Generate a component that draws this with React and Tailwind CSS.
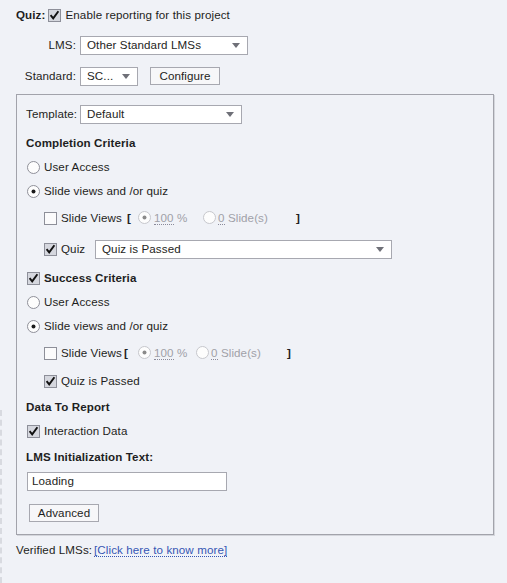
import React from 'react';

const Check = ({ checked }) => (
  <svg width="13" height="13" viewBox="0 0 13 13" className="shrink-0">
    <rect x="0.5" y="0.5" width="12" height="12" fill={checked ? '#d5d7de' : '#fbfbfc'} stroke="#8d8f99" />
    {checked && <path d="M2.6 6.2 L5.2 9.4 L10.4 2.2" stroke="#111" strokeWidth="1.9" fill="none" />}
  </svg>
);

const Radio = ({ checked, disabled }) => (
  <svg width="13" height="13" viewBox="0 0 13 13" className="shrink-0">
    <circle cx="6.5" cy="6.5" r="6" fill="#fdfdfd" stroke={disabled ? '#c6c7cc' : '#8f9099'} />
    {checked && <circle cx="6.5" cy="6.5" r="2" fill={disabled ? '#8a8a8a' : '#1a1a1a'} />}
  </svg>
);

const Arrow = () => (
  <svg width="8" height="5" viewBox="0 0 8 5" className="shrink-0">
    <path d="M0 0 H8 L4 5 Z" fill="#6f7078" />
  </svg>
);

const Select = ({ text, className }) => (
  <div className={`h-[19px] bg-white border border-[#a7a8b0] flex items-center justify-between pl-[6px] pr-[7px] ${className}`}>
    <span>{text}</span>
    <Arrow />
  </div>
);

const Button = ({ children, className }) => (
  <div className={`h-[18px] bg-[#f7f7f9] border border-[#a7a8b0] flex items-center justify-center ${className}`}>{children}</div>
);

const Row = ({ className = '', children }) => (
  <div className={`h-[20px] flex items-center ${className}`}>{children}</div>
);

// widths keep the bracket, radios and closing bracket where the dialog puts them
const SlideViews = ({ w }) => (
  <Row className="pl-[18px]">
    <Check />
    <span className={`ml-[4px] shrink-0 ${w[0]}`}>Slide Views</span>
    <span className={`shrink-0 font-bold ${w[1]}`}>[</span>
    <div className={`shrink-0 flex items-center text-[#a0a1a8] ${w[2]}`}>
      <Radio checked disabled />
      <span className="ml-[3px]"><span className="border-b border-dotted border-[#8a8a9a]">100</span> %</span>
    </div>
    <div className={`shrink-0 flex items-center text-[#a0a1a8] ${w[3]}`}>
      <Radio disabled />
      <span className="ml-[2px]"><span className="border-b border-dotted border-[#8a8a9a]">0</span> Slide(s)</span>
    </div>
    <span className="font-bold">]</span>
  </Row>
);

export default function App() {
  return (
    <div className="relative w-[507px] h-[583px] bg-[#f0f2f7] whitespace-nowrap text-[11.6px] tracking-[0.1px] text-[#1e1e22] font-['Liberation_Sans',Arial,sans-serif] pl-[16px] pt-[5px] overflow-hidden">
      <div className="absolute left-0 top-[410px] bottom-0 border-l-2 border-dashed border-[#d8dae0]" />

      <Row>
        <span className="font-bold">Quiz:</span>
        <span className="ml-[3px]"><Check checked /></span>
        <span className="ml-[4px]">Enable reporting for this project</span>
      </Row>

      <Row className="mt-[10px]">
        <span className="w-[61px] text-right pr-[1px]">LMS:</span>
        <Select text="Other Standard LMSs" className="ml-[3px] w-[168px]" />
      </Row>

      <Row className="mt-[11px]">
        <span className="w-[61px] text-right pr-[1px]">Standard:</span>
        <Select text="SC..." className="ml-[3px] w-[58px]" />
        <Button className="ml-[12px] w-[70px]">Configure</Button>
      </Row>

      <div className="mt-[8px] w-[478px] border border-[#a2a3ab] shadow-[1px_1px_0_#d4d6dc] pl-[9px] pt-[9px] pb-[11px]">
        <Row>
          <span className="w-[54px]">Template:</span>
          <Select text="Default" className="w-[162px]" />
        </Row>

        <Row className="mt-[9px] font-bold">Completion Criteria</Row>

        <Row className="mt-[4px] pl-[1px]">
          <Radio />
          <span className="ml-[4px]">User Access</span>
        </Row>

        <Row className="mt-[4px] pl-[1px]">
          <Radio checked />
          <span className="ml-[4px]">Slide views and /or quiz</span>
        </Row>

        <div className="mt-[7px]">
          <SlideViews w={['w-[66px]', 'w-[11px]', 'w-[65px]', 'w-[93px]']} />
        </div>

        <Row className="mt-[11px] pl-[18px]">
          <Check checked />
          <span className="ml-[4px] w-[34px]">Quiz</span>
          <Select text="Quiz is Passed" className="w-[297px]" />
        </Row>

        <Row className="mt-[9px] pl-[1px]">
          <Check checked />
          <span className="ml-[4px] font-bold">Success Criteria</span>
        </Row>

        <Row className="mt-[4px] pl-[1px]">
          <Radio />
          <span className="ml-[4px]">User Access</span>
        </Row>

        <Row className="mt-[4px] pl-[1px]">
          <Radio checked />
          <span className="ml-[4px]">Slide views and /or quiz</span>
        </Row>

        <div className="mt-[7px]">
          <SlideViews w={['w-[63px]', 'w-[14px]', 'w-[58px]', 'w-[91px]']} />
        </div>

        <Row className="mt-[8px] pl-[18px]">
          <Check checked />
          <span className="ml-[4px]">Quiz is Passed</span>
        </Row>

        <Row className="mt-[6px] font-bold">Data To Report</Row>

        <Row className="mt-[4px] pl-[1px]">
          <Check checked />
          <span className="ml-[4px]">Interaction Data</span>
        </Row>

        <Row className="mt-[6px] font-bold">LMS Initialization Text:</Row>

        <Row className="mt-[4px] pl-[1px]">
          <div className="w-[200px] h-[19px] bg-white border border-[#a7a8b0] flex items-center pl-[4px]">Loading</div>
        </Row>

        <Row className="mt-[12px] pl-[3px]">
          <Button className="w-[70px]">Advanced</Button>
        </Row>
      </div>

      <Row className="mt-[5px]">
        <span className="w-[78px] shrink-0">Verified LMSs:</span>
        <span className="text-[#3656b4] border-b border-dotted border-[#3656b4] leading-[13px]">[Click here to know more]</span>
      </Row>
    </div>
  );
}
